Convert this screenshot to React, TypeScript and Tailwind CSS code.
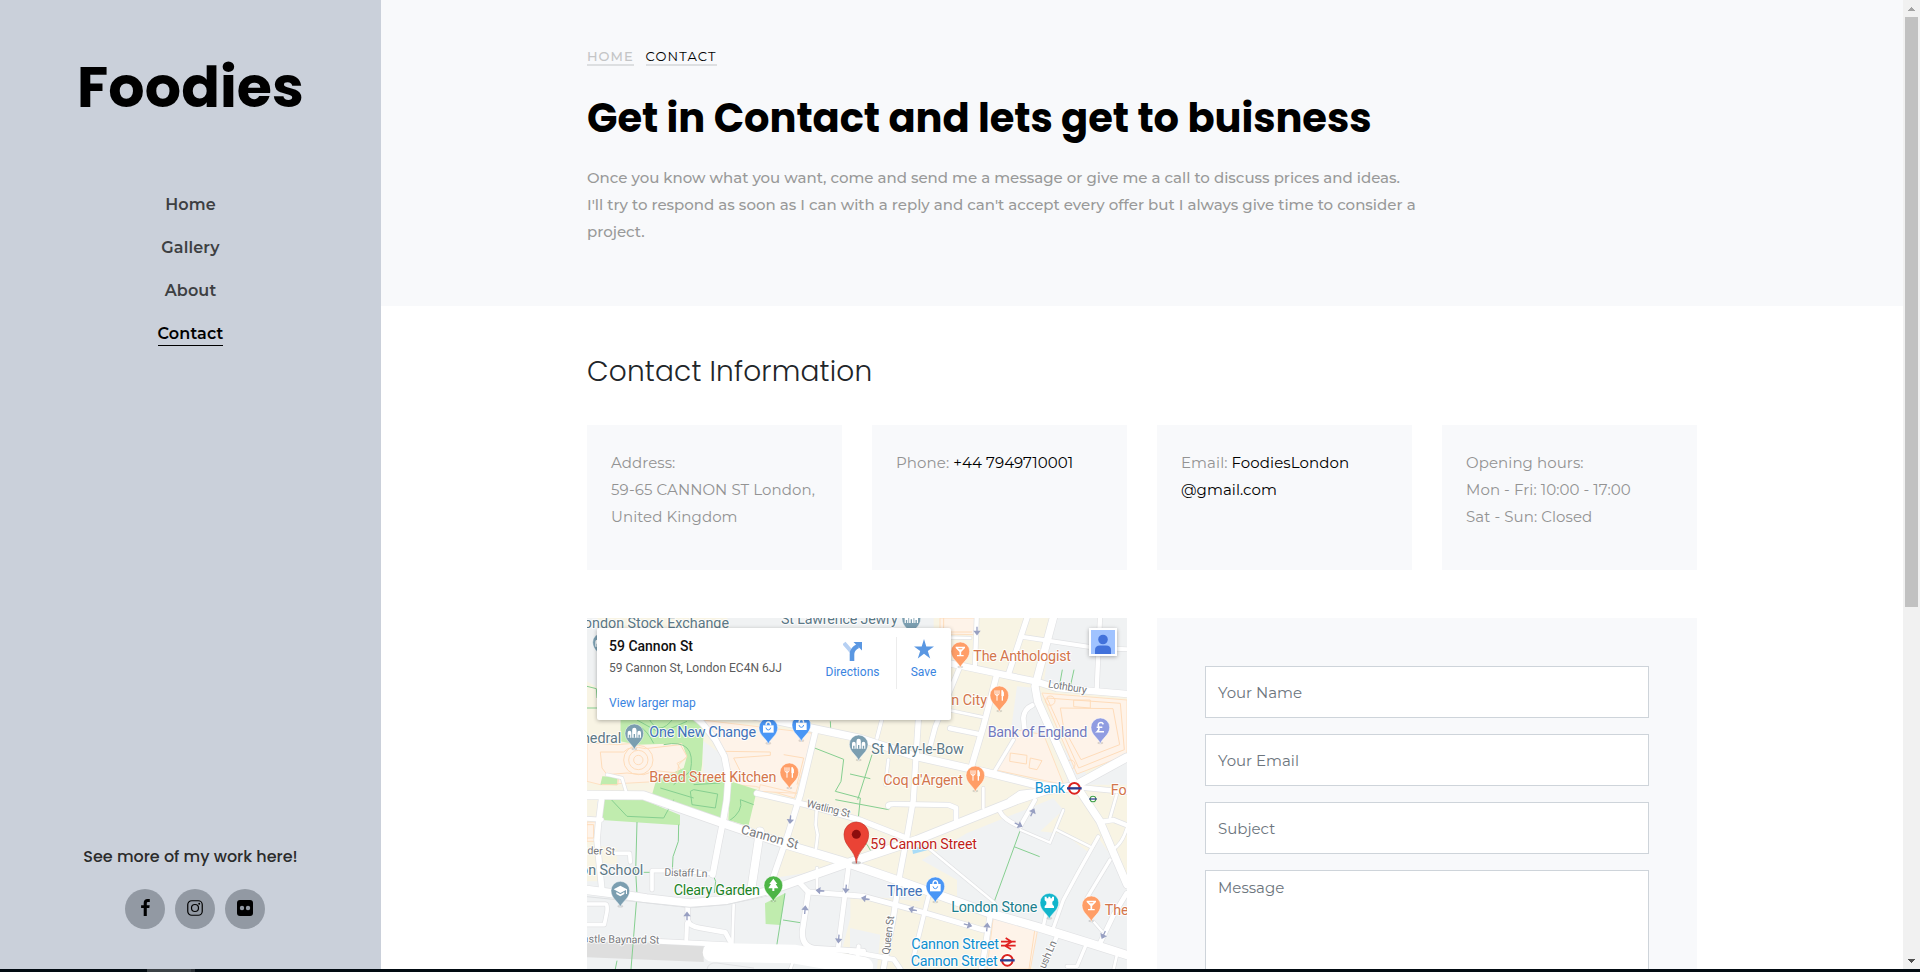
import type { ReactNode } from 'react';

const body = "font-['Montserrat','Inter',sans-serif]";
const display = "font-['Poppins','Inter',sans-serif]";

/* ---------- Sidebar ---------- */

const navItems = ['Home', 'Gallery', 'About', 'Contact'];

function FacebookIcon() {
  return (
    <svg width="9" height="17" viewBox="0 0 9 17">
      <path d="M8.8.1v2.8H7.2C6 2.900 5.800 3.500 5.800 4.300V6.200h2.900L8.300 9.100H5.800v7.800H2.700V9.100H.1V6.200h2.600V4C2.700 1.400 4.200 0 6.500 0c1.100 0 2 .1 2.300.1z" />
    </svg>
  );
}

function InstagramIcon() {
  return (
    <svg width="16" height="16" viewBox="0 0 16 16" fill="none" stroke="#000">
      <rect x="0.75" y="0.75" width="14.5" height="14.5" rx="4" strokeWidth="1.2" />
      <circle cx="8" cy="8" r="3.5" strokeWidth="1.2" />
      <circle cx="12.2" cy="3.8" r="0.95" fill="#000" stroke="none" />
    </svg>
  );
}

function FlickrIcon() {
  return (
    <svg width="16" height="16" viewBox="0 0 16 16">
      <rect width="16" height="16" rx="3" />
      <circle cx="5" cy="8" r="2.2" fill="#9299a3" />
      <circle cx="11" cy="8" r="2.2" fill="#9299a3" />
    </svg>
  );
}

function Social({ children }: { children: ReactNode }) {
  return (
    <a className="flex h-10 w-10 items-center justify-center rounded-full bg-[#9299a3] pb-[3px]">{children}</a>
  );
}

function Sidebar() {
  return (
    <aside className="flex w-[381px] shrink-0 flex-col items-center bg-[#cad0da] pt-[54px] pb-10">
      <h1 className={`${display} text-[57px] leading-[67px] font-bold tracking-[0.1px] text-black`}>Foodies</h1>
      <nav className={`${body} mt-[72px] flex flex-col items-center gap-[19px] text-base leading-6 font-semibold tracking-[0.15px] text-[#3d3f42]`}>
        {navItems.map((n) => (
          <a key={n} className={n === 'Contact' ? 'h-6 border-b border-black text-black' : 'h-6'}>
            {n}
          </a>
        ))}
      </nav>
      <div className="mt-auto flex flex-col items-center">
        <p className={`${display} text-base leading-6 font-medium text-[#2b2b2b]`}>See more of my work here!</p>
        <div className="mt-5 flex gap-[10px] pl-[9px]">
          <Social><FacebookIcon /></Social>
          <Social><InstagramIcon /></Social>
          <Social><FlickrIcon /></Social>
        </div>
      </div>
    </aside>
  );
}

/* ---------- Map ---------- */

type Road = [string, number];

const roads: Road[] = [
  ['M1059 130L1229 166L1349 191L1409 210L1620 228', 19],
  ['M1320 0L1264 170', 16],
  ['M1304 56L1529 90L1620 94', 12],
  ['M1539 0L1529 216', 13],
  ['M1169 0L1164 141', 13],
  ['M1060 58L1150 60', 8],
  ['M1119 146L1045 326L1029 386', 14],
  ['M1089 331L1174 348', 14],
  ['M1075 274L1185 297', 8],
  ['M1229 171L1189 326L1155 440', 17],
  ['M1312 330L1309 300Q1312 272 1336 262', 14],
  ['M1279 366L1219 466', 10],
  ['M884 306L870 360', 10],
  ['M904 425L895 500', 8],
  ['M1189 510L1189 570', 8],
  ['M1269 546L1300 525L1380 516', 14],
  ['M509 526L659 561L819 606L959 661', 16],
  ['M689 576L686 620L692 650L687 691', 8],
  ['M60 470L105 480L120 530', 8],
  ['M44 541L34 620L30 666L44 810', 17],
  ['M0 602L44 605', 12],
  ['M84 706L128 706L130 732', 11],
  ['M195 815L195 758L240 758L372 766', 11],
  ['M0 858L55 858Q62 858 60 880L52 920L0 920', 11],
  ['M302 860L302 905Q305 925 340 930L415 943L432 975', 14],
  ['M300 915L298 965', 12],
  ['M440 860L436 980', 8],
  ['M215 970L420 980', 14],
  ['M639 796L664 822L830 835L1019 886L1189 936', 15],
  ['M664 822L646 940Q644 990 690 992L829 1000', 16],
  ['M690 750L690 810', 8],
  ['M784 751L754 986', 14],
  ['M624 1015L610 1053', 8],
  ['M789 1000L920 1024L940 1053', 14],
  ['M815 985L810 1030', 12],
  ['M904 565Q900 558 920 558L1085 561L1107 570L1107 606', 14],
  ['M1239 581Q1250 605 1299 626L1344 546', 12],
  ['M1301 636L1389 674L1429 576', 7],
  ['M1409 636L1509 686', 7],
  ['M1024 690L1224 855', 7],
  ['M1209 896L1184 1053', 16],
  ['M1024 836L979 1020', 12],
  ['M1534 656L1470 770L1429 846L1399 930', 10],
  ['M1409 956L1369 1053', 12],
  ['M1569 726L1500 840L1503 870', 10],
  ['M1619 826L1580 890L1539 976', 14],
  ['M1539 612L1580 606L1620 622', 13],
  ['M1589 530L1569 600', 8],
  ['M1620 630Q1605 680 1575 696', 8],
  ['M1385 850L1370 920', 10],
  ['M1519 910L1545 940', 7],
  ['M1499 976L1470 1045L1440 1045', 10],
  ['M1590 1010L1580 1053', 8],
  ['M519 640L494 806', 24],
  ['M684 346L640 530L604 646L559 776', 17],
  ['M994 306L979 546L961 650L939 766L919 900L889 1053', 16],
  ['M315 290L345 315L385 365L412 415L424 476L419 546L409 606L394 680L377 770', 18],
  ['M430 280L559 306L819 361L989 416L1189 461L1349 501L1439 511', 22],
  ['M1399 0L1344 205L1352 250L1459 490L1539 610L1590 730L1620 800', 22],
  ['M0 816L79 826L179 841L309 856L419 846L539 821L659 778L779 736L989 666L1139 606L1289 546L1379 516L1459 506L1620 418', 25],
  ['M1459 506L1620 522', 14],
  ['M0 531L169 532L409 616L599 680L760 728L929 786L1209 886L1349 926L1509 976L1620 1011', 25],
];

const footpaths = [
  'M150 612L146 760L150 830L132 1053', 'M275 620L274 670L258 716L256 758', 'M170 763L195 763', 'M377 768L386 790L382 825',
  'M594 826L568 990', 'M588 906L640 914', 'M683 390L770 424L762 490L745 520', 'M745 520L820 540L812 620', 'M745 545L905 575L908 560', 'M855 410L812 545',
  'M789 468L850 482', 'M1426 155L1418 200', 'M1461 155L1450 205', 'M1300 636L1222 850', 'M1281 686L1358 716', 'M0 205L28 212L30 240', 'M0 270L40 270',
  'M730 310L732 350', 'M789 690L790 630', 'M800 680Q830 650 852 700', 'M73 545L120 595L230 600L260 545', 'M310 520L315 560L385 570L392 528L320 515Z', 'M425 610Q470 580 460 545L500 560',
  'M85 1053L90 1028',
];

const peach = [
  'M345 306L680 346L622 540L505 505L440 500L420 420Z', 'M1059 0L1166 0L1162 50L1059 48Z',
  'M1365 225L1620 246L1620 410L1470 468Z', 'M1290 336L1370 350L1430 500L1226 456Z', 'M1220 888L1354 924L1330 1053L1200 1053Z',
  'M0 374L90 380L140 376L290 376L300 420L270 436L290 470L220 490L40 500L0 490Z', 'M520 500L630 526L515 520Z', 'M0 612L26 612L28 670L0 670Z',
];

const outlines = [
  'M40 402L110 402Q130 380 175 392L280 380L300 415L275 440L272 465L205 458L170 470L120 465L60 470L45 450Z',
  'M410 400L550 402L550 412L440 420L465 470', 'M1380 240L1600 256L1612 395L1475 450Z', 'M1420 270L1578 272L1598 380L1482 425L1430 330Z',
  'M1460 246L1510 246L1510 270L1460 266Z', 'M1270 405L1320 412L1318 438L1268 430Z', 'M1330 420L1365 428L1350 455L1326 450Z',
  'M1250 900L1345 925L1326 1053', 'M590 410L650 420L630 500', 'M70 470L95 475L92 500L45 500', 'M0 620L20 620L20 660L0 660', 'M1070 0L1070 42L1155 42',
];

const arrows: [number, number, number][] = [
  [1170, 38, 90], [610, 604, 95], [300, 895, -90], [654, 876, -85], [700, 818, 185], [777, 812, 95], [755, 962, 95],
  [836, 842, 190], [978, 875, 195], [1142, 921, 15], [1200, 928, -85], [1294, 620, 25], [1336, 584, -65], [1550, 950, 115],
];

type Kind = 'museum' | 'shop' | 'food' | 'bar' | 'pound' | 'tree' | 'rook' | 'school';

const kindFill: Record<Kind, string> = {
  museum: '#7b9eb0', shop: '#4a96f5', food: '#ff9e67', bar: '#ff9e67', pound: '#909ce1', tree: '#4db546', rook: '#12b5cb', school: '#7b9eb0',
};

function Glyph({ kind }: { kind: Kind }) {
  switch (kind) {
    case 'museum':
      return (
        <g fill="#fff">
          <path d="M-20 13V-2a5.500 6 0 0 1 11 0V13ZM-6.500 13V-10a6.500 7 0 0 1 13 0V13ZM9 13V-2a5.500 6 0 0 1 11 0V13Z" />
          <path d="M-14.500 13V4M0 13V2M14.500 13V4" stroke="#7b9eb0" strokeWidth="4" />
        </g>
      );
    case 'shop':
      return (
        <g>
          <path d="M-16 -7H16V15H-16Z" fill="#fff" />
          <path d="M-7 -7Q-7 -17 0 -17T7 -7" fill="none" stroke="#fff" strokeWidth="4" />
          <path d="M-7 0Q-6 7 0 7T7 0" fill="none" stroke="#4a96f5" strokeWidth="3" />
        </g>
      );
    case 'food':
      return (
        <g fill="none" stroke="#fff" strokeWidth="3">
          <path d="M-13 -15V-5Q-13 0 -7 0T-1 -5V-15M-7 -15V16" />
          <path d="M8 -15Q14 -12 12 2H8Z" fill="#fff" />
          <path d="M9 -14V16" strokeWidth="4" />
        </g>
      );
    case 'bar':
      return (
        <g fill="#fff">
          <path d="M-14 -14H14V-10L2.500 2V11H10V15H-10V11H-2.500V2L-14 -10Z" />
          <path d="M-7 -9H7L4 -6H-4Z" fill="#ff9e67" />
        </g>
      );
    case 'pound':
      return <path d="M9 -9Q6 -16 -1 -14Q-9 -11 -5 -2Q-2 8 -9 13H11M-11 0H6" fill="none" stroke="#fff" strokeWidth="4.5" />;
    case 'tree':
      return <path d="M0 -20L12 -4H7L15 9H3V17H-3V9H-15L-7 -4H-12Z" fill="#fff" />;
    case 'rook':
      return <path d="M-14 -18H-8V-13H-3V-18H3V-13H8V-18H14V-7L9 -3V5L14 11V16H-14V11L-9 5V-3L-14 -7Z" fill="#fff" />;
    case 'school':
      return <path d="M-20 -4L0 -15L20 -4V10H17V-2L0 7ZM-12 4L0 11L12 4V10L0 17L-12 10Z" fill="#fff" />;
  }
}

const pins: [Kind, number, number][] = [
  ['museum', 45, 73], ['museum', 142, 346], ['museum', 815, 379], ['museum', 973, 2], ['school', 100, 818],
  ['shop', 544, 329], ['shop', 643, 321], ['shop', 1045, 805], ['food', 607, 463], ['food', 1237, 232], ['food', 1165, 472],
  ['bar', 1120, 100], ['bar', 1513, 862], ['pound', 1540, 328], ['tree', 559, 802], ['rook', 1387, 854],
];

type Label = {
  t: string; x: number; y: number; c: string; w?: number; end?: boolean; s?: number; r?: number;
};

const slate = '#5c7886';
const orange = '#d3754b';
const street = '#77787b';

const labels: Label[] = [
  { t: 'London Stock Exchange', x: 426, y: 29, c: slate, end: true },
  { t: 'St Lawrence Jewry', x: 582, y: 18, c: slate, w: 350 },
  { t: 'Cathedral', x: 103, y: 374, c: slate, end: true },
  { t: 'One New Change', x: 187, y: 358, c: '#4272b8', w: 320 },
  { t: 'Bread Street Kitchen', x: 187, y: 491, c: orange, w: 381 },
  { t: 'The Anthologist', x: 1159, y: 129, c: orange, w: 293 },
  { t: 'an City', x: 1200, y: 261, c: orange, end: true },
  { t: 'Bank of England', x: 1202, y: 357, c: '#7279bd', w: 299 },
  { t: 'St Mary-le-Bow', x: 853, y: 408, c: slate, w: 277 },
  { t: "Coq d'Argent", x: 889, y: 501, c: orange, w: 239 },
  { t: 'Bank', x: 1343, y: 525, c: '#0f8fd0', w: 91 },
  { t: 'Fo', x: 1571, y: 531, c: orange },
  { t: 'on School', x: 169, y: 772, c: slate, end: true },
  { t: 'Cleary Garden', x: 260, y: 830, c: '#1c8427', w: 259 },
  { t: '59 Cannon Street', x: 850, y: 693, c: '#c11f1a', w: 320 },
  { t: 'Three', x: 900, y: 833, c: '#4272b8', w: 106 },
  { t: 'London Stone', x: 1093, y: 881, c: '#1b7f8c', w: 258 },
  { t: 'The', x: 1553, y: 891, c: orange },
  { t: 'Cannon Street', x: 973, y: 992, c: '#0f8fd0', w: 263 },
  { t: 'Cannon Street', x: 971, y: 1043, c: '#0f8fd0', w: 261 },
  { t: 'Lothbury', x: 1382, y: 208, c: street, w: 117, s: 32, r: 9 },
  { t: 'Watling St', x: 657, y: 566, c: street, w: 134, s: 32, r: 14 },
  { t: 'Cannon St', x: 460, y: 646, c: street, w: 177, s: 39, r: 15.5 },
  { t: 'ider St', x: 84, y: 711, c: street, end: true, s: 32, r: 2 },
  { t: 'Distaff Ln', x: 232, y: 773, c: street, w: 129, s: 32, r: 2 },
  { t: 'astle Baynard St', x: 217, y: 977, c: street, end: true, s: 32, r: 1 },
  { t: 'Queen St', x: 907, y: 1011, c: street, w: 117, s: 32, r: -83 },
  { t: 'ush Ln', x: 1374, y: 1054, c: street, w: 88, s: 32, r: -66 },
];

function Roundel({ x, y, r, ring }: { x: number; y: number; r: number; ring: string }) {
  const s = r / 17;
  return (
    <g transform={`translate(${x} ${y}) scale(${s})`}>
      <circle r="21" fill="#fff" />
      <circle r="16" fill="#fff" stroke={ring} strokeWidth="6" />
      <path d="M-22 0H22" stroke="#2b3a8c" strokeWidth="7" />
    </g>
  );
}

function CityMap() {
  return (
    <svg width="540" height="351" viewBox="0 0 1620 1053" className="block">
      <rect width="1620" height="1053" fill="#f8f4e4" />
      <g fill="#f0f2f3">
        <path d="M0 0H30L50 40V220L0 190Z M420 0H1040V60H440Z M1400 0H1620V226L1370 195Z" />
        <path d="M345 366L405 410L424 476L350 470Z M1290 205L1350 210L1400 340L1340 380L1270 350Z M1434 380L1500 470L1620 420V500L1440 500Z" />
        <path d="M30 550L169 540L409 620L500 650L590 690L560 780L690 760L760 740L940 790L1000 850L790 830V900L750 1053H0V790L40 790Z" />
        <path d="M1004 726L1139 646L1399 541L1429 576L1360 640L1534 660L1620 780V1053H1340L1200 900L1110 850V786Z" />
        <path d="M789 930L880 950L870 1053H789Z" />
      </g>
      <path d="M100 545L160 545L140 600L95 600ZM0 680L90 690V740L0 730ZM590 690L760 735L690 770L585 745ZM1440 540H1620V640L1560 640L1500 700L1410 630Z" fill="#f8f4e4" />
      <path d="M1455 360L1470 300L1560 285L1580 380L1490 412Z" fill="#eceff3" />
      <g fill="#fef3e9" stroke="#fee0c2" strokeWidth="3">
        {peach.map((d) => <path key={d} d={d} />)}
      </g>
      <g fill="#c0ecae">
        <path d="M100 300H322L350 340L345 440L330 540L235 505L200 490L290 450L300 415L285 376L150 380L100 370Z" />
        <path d="M205 495L424 476L419 546L405 606L195 530Z M430 490L510 515L484 625L424 606Z M44 541L169 545L279 591V622L44 606Z M46 475L92 478L90 502L40 500Z" />
        <path d="M534 856L594 826L580 921L536 918Z" />
        <path d="M45 306H100V350L85 350Z" fill="#f8f4e4" />
      </g>
      <path d="M0 970L350 978V1032L0 1018Z" fill="#dedede" />
      <g fill="none" stroke="#fedcba" strokeWidth="3">
        {outlines.map((d) => <path key={d} d={d} />)}
        <circle cx="154" cy="426" r="44" />
        <circle cx="154" cy="426" r="29" />
        <circle cx="154" cy="426" r="14" />
        <circle cx="1390" cy="248" r="14" />
        <circle cx="1450" cy="440" r="14" />
      </g>
      <g fill="none" stroke="#86cf90" strokeWidth="3">
        {footpaths.map((d) => <path key={d} d={d} />)}
        <path d="M185 300Q215 360 260 300M150 306L220 345L300 310M120 330Q160 300 200 376M230 380Q330 360 310 460L260 500M220 510L320 540M320 500L400 495" />
      </g>
      <path d="M975 690L1020 684L1025 695L978 708Z" fill="#a9dcf7" />
      <g fill="none" strokeLinejoin="round" strokeLinecap="round">
        {roads.map(([d, w]) => <path key={d} d={d} stroke="#e1e2e4" strokeWidth={w + 4} />)}
        {roads.map(([d, w]) => <path key={d} d={d} stroke="#ffffff" strokeWidth={w} />)}
        <path d="M375 1003L620 1008L830 1045" stroke="#fff" strokeWidth="56" />
        <path d="M360 1053Q365 1032 390 1035L500 1050" stroke="#e1e2e4" strokeWidth="3" />
      </g>
      <path d="M0 836L309 868L419 860L539 832" fill="none" stroke="#dfe1e3" strokeWidth="3" />
      <g fill="none" stroke="#98a0c2" strokeWidth="4">
        {arrows.map(([x, y, r]) => (
          <path key={`${x}-${y}`} transform={`translate(${x} ${y}) rotate(${r})`} d="M-12 0H10M2 -7L11 0L2 7Z" fill="#98a0c2" />
        ))}
      </g>
      <g className="font-['Roboto',sans-serif]">
        {labels.map((l) => (
          <text
            key={l.t + l.y}
            transform={`translate(${l.x} ${l.y}) rotate(${l.r ?? 0})`}
            fontSize={l.s ?? 43}
            fill={l.c}
            stroke="#ffffff"
            strokeOpacity="0.85"
            strokeWidth="6"
            strokeLinejoin="round"
            paintOrder="stroke"
            textAnchor={l.end ? 'end' : 'start'}
            textLength={l.w}
          >
            {l.t}
          </text>
        ))}
      </g>
      {pins.map(([kind, x, y]) => (
        <g key={`${x}-${y}`} transform={`translate(${x} ${y})`}>
          <ellipse cx="0" cy="47" rx="9" ry="4" fill="#00000022" />
          <path d="M0 50C-3 34 -28 24 -28 0A28 28 0 0 1 28 0C28 24 3 34 0 50Z" fill={kindFill[kind]} stroke="#fff" strokeWidth="2" strokeOpacity="0.7" />
          <Glyph kind={kind} />
        </g>
      ))}
      <g transform="translate(808 649)">
        <ellipse cy="85" rx="14" ry="5" fill="#00000033" />
        <path d="M0 87C-3 45 -37 38 -37 0A37 37 0 0 1 37 0C37 38 3 45 0 87Z" fill="#ea4335" stroke="#c5352a" strokeWidth="2" />
        <circle r="13.5" fill="#8c0d0d" />
      </g>
      <Roundel x={1462} y={511} r={17} ring="#dc241f" />
      <Roundel x={1261} y={1027} r={17} ring="#dc241f" />
      <Roundel x={1518} y={543} r={9} ring="#43a047" />
      <path d="M1242 971H1286M1242 983H1286M1256 960L1274 971L1254 983L1272 994" fill="none" stroke="#e02020" strokeWidth="5" />
    </svg>
  );
}

function MapCard() {
  return (
    <div className="absolute top-[10px] left-[10px] flex h-[92px] w-[354px] rounded-[2px] bg-white pt-[9px] pl-3 font-['Roboto',sans-serif] text-xs shadow-[0_1px_4px_rgba(0,0,0,0.3)]">
      <div className="flex w-[200px] flex-col">
        <p className="text-sm leading-[18px] font-medium text-[#111111]">59 Cannon St</p>
        <p className="mt-[5px] leading-4 whitespace-nowrap text-[#5b5b5b]">59 Cannon St, London EC4N 6JJ</p>
        <a className="mt-[19px] leading-4 tracking-[0.04px] text-[#3a84df]">View larger map</a>
      </div>
      <div className="flex h-[52px] w-[88px] flex-col items-center border-r border-[#ececec] text-[#3a84df]">
        <svg width="20" height="20" viewBox="0 0 20 20" className="mt-[4px]">
          <path d="M1 2L7 9L10 13" fill="none" stroke="#b6d0f3" strokeWidth="4" />
          <path d="M9 20V13Q9 8 15 5" fill="none" stroke="#5a97e2" strokeWidth="4.600" />
          <path d="M10.500 1H19V9.500Z" fill="#5a97e2" />
        </svg>
        <span className="mt-[3px] leading-4">Directions</span>
      </div>
      <div className="flex h-[52px] w-[53px] flex-col items-center text-[#3a84df]">
        <svg width="20" height="20" viewBox="0 0 20 20" className="mt-[2px]">
          <path d="M10 0L12.300 7.400H20L13.800 11.900L16.200 19.400L10 14.800L3.800 19.400L6.200 11.900L0 7.400H7.700Z" fill="#5a97e2" />
        </svg>
        <span className="mt-[5px] leading-4">Save</span>
      </div>
    </div>
  );
}

function MapPanel() {
  return (
    <div className="relative h-[351px] w-[540px] overflow-hidden">
      <CityMap />
      <MapCard />
      <div className="absolute top-[10px] left-[502px] h-7 w-7 bg-white p-[2px] shadow-[0_1px_4px_rgba(0,0,0,0.3)]">
        <svg width="24" height="24" viewBox="0 0 24 24">
          <rect width="24" height="24" fill="#a0c3ff" />
          <circle cx="12" cy="9.500" r="4.800" fill="#4272db" />
          <path d="M4 24V20Q4 15.500 9 15.500H15Q20 15.500 20 20V24Z" fill="#4272db" />
        </svg>
      </div>
    </div>
  );
}

/* ---------- Main column ---------- */

function InfoCard({ children }: { children: ReactNode }) {
  return <div className="h-[145px] w-[255px] bg-[#f8f9fb] p-6 pr-4 tracking-[0.08px] text-[#939393]">{children}</div>;
}

const fields = ['Your Name', 'Your Email', 'Subject'];

function Main() {
  return (
    <main className={`${body} flex grow flex-col overflow-hidden bg-white text-[15px] leading-[27px] text-[#999999]`}>
      <header className="flex h-[306px] shrink-0 flex-col items-start bg-[#f8f9fb] pt-12 pl-[206px]">
        <div className="flex gap-3 text-[13px] leading-4 tracking-[1px] uppercase">
          <a className="border-b-2 border-[#dddfe1] font-medium text-[#c4c5c6]">Home</a>
          <a className="border-b-2 border-[#dddfe1] tracking-[1.15px] text-black">Contact</a>
        </div>
        <h2 className={`${display} mt-7 text-[40px] leading-[48px] font-bold tracking-[-0.06px] whitespace-nowrap text-black`}>
          Get in Contact and lets get to buisness
        </h2>
        <p className="mt-[22px] font-medium whitespace-nowrap">
          Once you know what you want, come and send me a message or give me a call to discuss prices and ideas.
          <br />
          I'll try to respond as soon as I can with a reply and can't accept every offer but I always give time to consider a
          <br />
          project.
        </p>
      </header>
      <section className="flex w-[1316px] shrink-0 flex-col pt-[49px] pl-[206px]">
        <h3 className={`${display} text-[28px] leading-[34px] font-light tracking-[0.18px] text-[#212529]`}>Contact Information</h3>
        <div className="mt-9 flex justify-between">
          <InfoCard>
            Address:
            <br />
            <span className="whitespace-nowrap">59-65 CANNON ST London,</span>
            <br />
            United Kingdom
          </InfoCard>
          <InfoCard>
            Phone: <span className="text-black">+44 7949710001</span>
          </InfoCard>
          <InfoCard>
            Email: <span className="text-black">FoodiesLondon<br />@gmail.com</span>
          </InfoCard>
          <InfoCard>
            Opening hours:
            <br />
            Mon - Fri: 10:00 - 17:00
            <br />
            Sat - Sun: Closed
          </InfoCard>
        </div>
        <div className="mt-12 flex justify-between">
          <MapPanel />
          <form className="flex h-[351px] w-[540px] flex-col gap-4 overflow-hidden bg-[#f8f9fb] px-12 pt-12 text-[#6c757d]">
            {fields.map((f) => (
              <div key={f} className="flex h-[52px] shrink-0 items-center border border-[#ced4da] bg-white px-3">
                {f}
              </div>
            ))}
            <div className="h-[180px] shrink-0 border border-[#ced4da] bg-white px-3 py-[6px] leading-[22.5px]">Message</div>
          </form>
        </div>
      </section>
    </main>
  );
}

function Scrollbar() {
  return (
    <div className="flex w-[17px] shrink-0 flex-col items-center bg-[#f1f1f1]">
      <div className="flex h-[17px] items-center justify-center">
        <svg width="7" height="4" viewBox="0 0 7 4" shapeRendering="crispEdges">
          <path d="M3 0H4V1H5V2H6V3H7V4H0V3H1V2H2V1H3Z" fill="#a3a3a3" />
        </svg>
      </div>
      <div className="h-[590px] w-[13px] bg-[#c1c1c1]" />
      <div className="mt-auto flex h-[17px] items-center justify-center">
        <svg width="7" height="4" viewBox="0 0 7 4" shapeRendering="crispEdges">
          <path d="M0 0H7V1H6V2H5V3H4V4H3V3H2V2H1V1H0Z" fill="#505050" />
        </svg>
      </div>
    </div>
  );
}

export default function App() {
  return (
    <div className="flex h-[972px] w-[1920px] flex-col overflow-hidden bg-white">
      <div className="flex h-[969px]">
        <Sidebar />
        <Main />
        <Scrollbar />
      </div>
      <div className="h-[3px] bg-[#020b12] pl-[147px]">
        <div className="h-[3px] w-12 border-r-4 border-[#2a2f35] bg-[#3b4146]" />
      </div>
    </div>
  );
}
